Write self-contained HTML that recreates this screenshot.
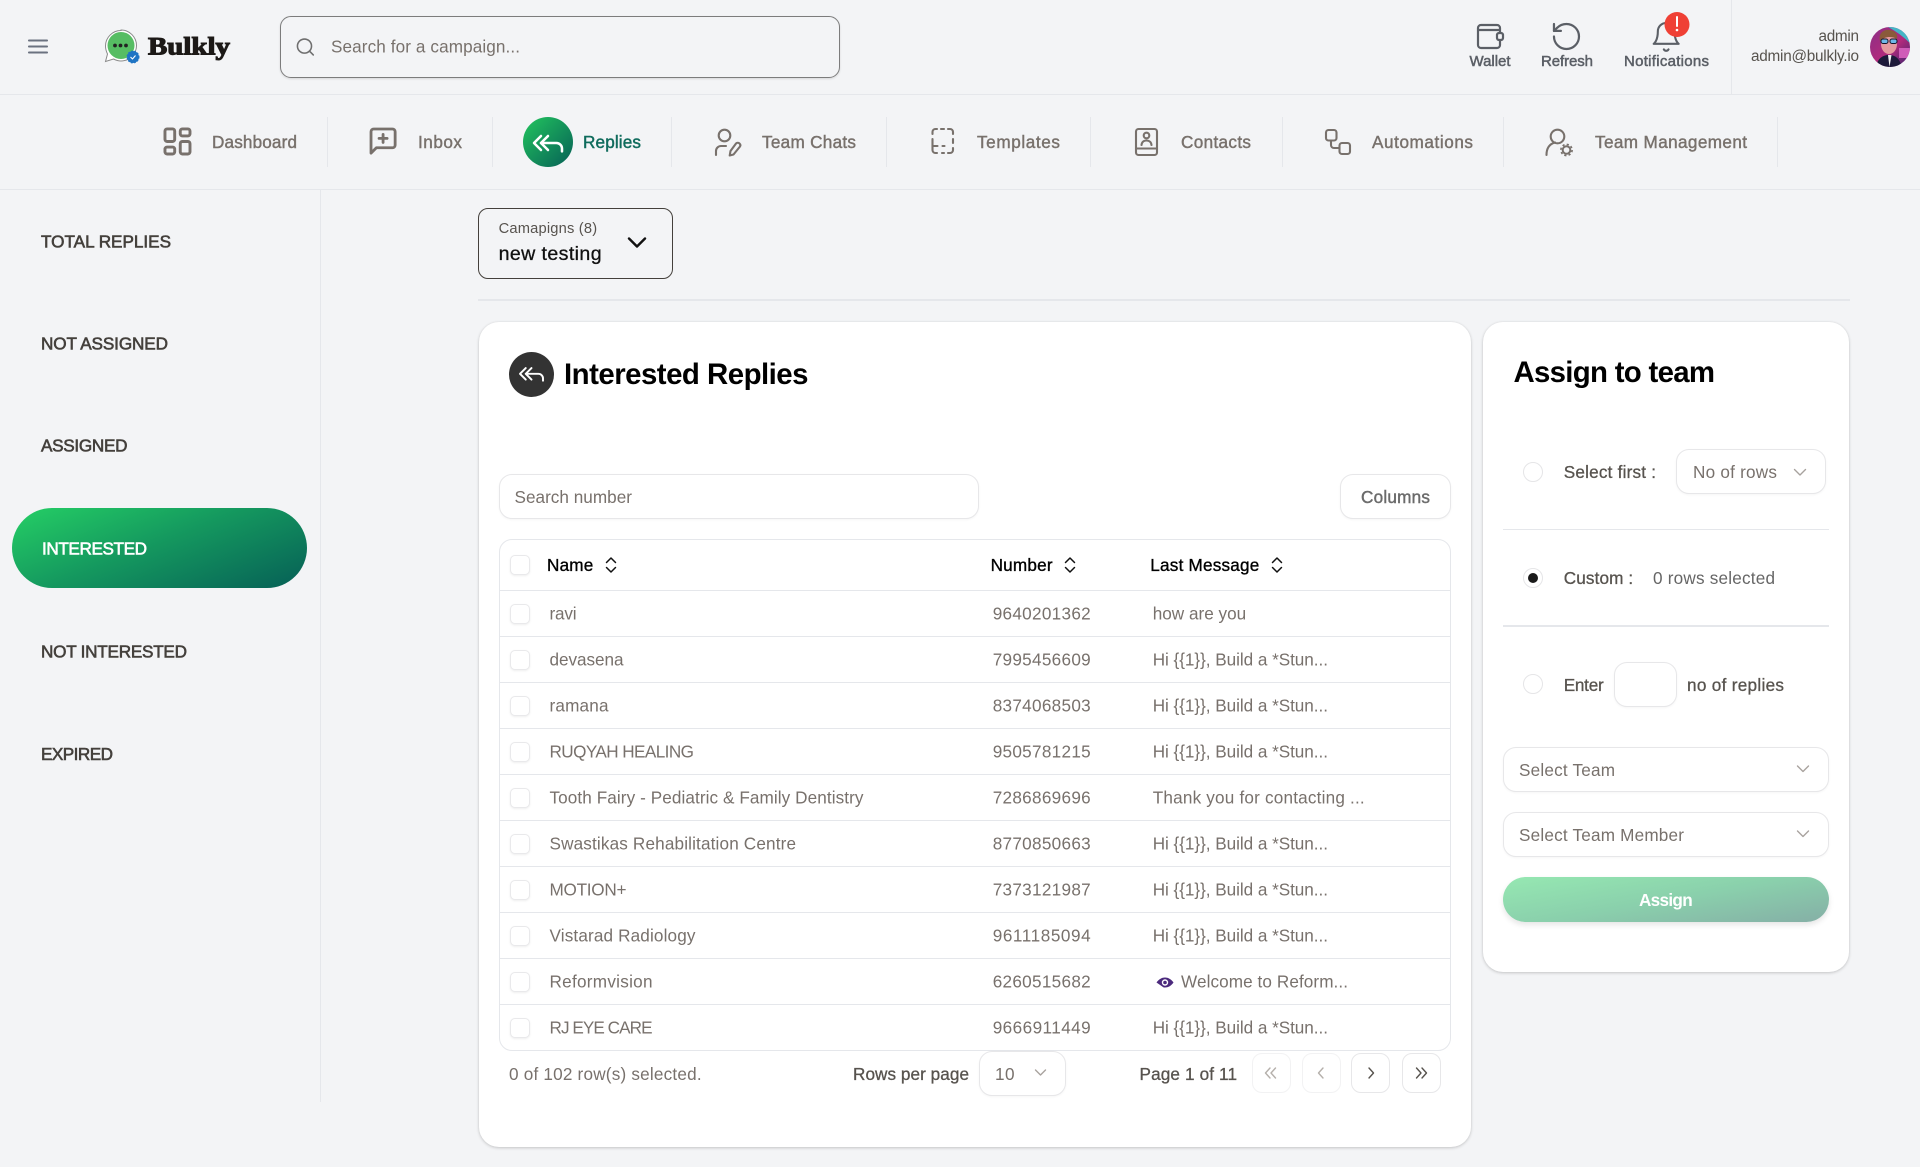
<!DOCTYPE html>
<html lang="en">
<head>
<meta charset="utf-8">
<title>Bulkly - Interested Replies</title>
<style>
*{box-sizing:border-box}
html,body{margin:0;padding:0;width:1920px;height:1167px;overflow:hidden;background:#f3f4f6;font-family:"Liberation Sans",sans-serif}
.b{position:absolute}
.line{background:#e5e7eb}
.card{background:#fff;border-radius:20px;box-shadow:0 1px 3px rgba(0,0,0,.18),0 0 2px rgba(0,0,0,.06)}
.field{background:#fff;border:1.5px solid #e7e7e9;border-radius:13px;box-shadow:0 1px 2px rgba(0,0,0,.04)}
.chk{width:20px;height:20px;left:510px;background:#fff;border:1.5px solid #e9e9eb;border-radius:5px;box-shadow:0 1px 2px rgba(0,0,0,.07)}
.pg{background:#fff;border:1.5px solid #e7e7e9;border-radius:10px;top:1053px;width:39px;height:40px}
.radio{width:20px;height:20px;left:1523px;background:#fff;border:1.5px solid #e5e5e7;border-radius:50%}
svg#o{position:absolute;left:0;top:0;width:1920px;height:1167px;pointer-events:none}
text{font-family:"Liberation Sans",sans-serif;font-size:17.15px;fill:#78716c}
.m{stroke:#78716c;stroke-width:.42px}
.s{font-size:15px;fill:#5b5f66;stroke:#5b5f66;stroke-width:.5px}
.side{fill:#44403c;stroke:#44403c;stroke-width:.6px}
.h{fill:#000;stroke:#000;stroke-width:.35px}
.d{fill:#57534e;stroke:#57534e;stroke-width:.3px}
.ic{fill:none;stroke:#78716c;stroke-width:2.1;stroke-linecap:round;stroke-linejoin:round}
.tp{fill:none;stroke:#5b5f66;stroke-linecap:round;stroke-linejoin:round}
.ch{fill:none;stroke:#a8a29e;stroke-width:1.4;stroke-linecap:round;stroke-linejoin:round}
.so{fill:none;stroke:#111;stroke-width:1.5;stroke-linecap:round;stroke-linejoin:round}
</style>
</head>
<body>
<!-- header / nav rules -->
<div class="b line" style="left:0;top:94px;width:1920px;height:1px"></div>
<div class="b line" style="left:1731px;top:0;width:1px;height:94px"></div>
<div class="b line" style="left:0;top:189px;width:1920px;height:1px"></div>
<div class="b" style="left:280px;top:16px;width:560px;height:62px;border:1.5px solid #7c7c7c;border-radius:11px;box-shadow:0 1px 2px rgba(0,0,0,.12)"></div>
<div class="b line" style="left:327px;top:117px;width:1px;height:50px"></div>
<div class="b line" style="left:492px;top:117px;width:1px;height:50px"></div>
<div class="b line" style="left:671px;top:117px;width:1px;height:50px"></div>
<div class="b line" style="left:886px;top:117px;width:1px;height:50px"></div>
<div class="b line" style="left:1090px;top:117px;width:1px;height:50px"></div>
<div class="b line" style="left:1282px;top:117px;width:1px;height:50px"></div>
<div class="b line" style="left:1503px;top:117px;width:1px;height:50px"></div>
<div class="b line" style="left:1776.500px;top:117px;width:1.5px;height:50px"></div>
<div class="b" style="left:523px;top:117px;width:50px;height:50px;border-radius:50%;background:linear-gradient(135deg,#22c55e,#065f56)"></div>
<!-- sidebar -->
<div class="b line" style="left:320px;top:190px;width:1px;height:912px"></div>
<div class="b" style="left:12px;top:508px;width:295px;height:80px;border-radius:40px;background:linear-gradient(158deg,#25cf65 0%,#159a5f 45%,#065f56 100%)"></div>
<!-- campaign selector -->
<div class="b" style="left:478px;top:208px;width:195px;height:71px;border:1.5px solid #44403c;border-radius:10px"></div>
<div class="b line" style="left:477.500px;top:299px;width:1372.500px;height:2px"></div>
<!-- main card -->
<div class="b card" style="left:479px;top:322px;width:992px;height:825px"></div>
<div class="b" style="left:509px;top:352px;width:45px;height:45px;border-radius:50%;background:#333"></div>
<div class="b field" style="left:499px;top:474px;width:480px;height:45px"></div>
<div class="b field" style="left:1340px;top:474px;width:111px;height:45px"></div>
<div class="b" style="left:499px;top:539px;width:952px;height:512px;border:1.5px solid #e5e7eb;border-radius:13px"></div>
<div class="b line" style="left:500px;top:590px;width:950px;height:1px"></div>
<div class="b line" style="left:500px;top:636px;width:950px;height:1px"></div>
<div class="b line" style="left:500px;top:682px;width:950px;height:1px"></div>
<div class="b line" style="left:500px;top:728px;width:950px;height:1px"></div>
<div class="b line" style="left:500px;top:774px;width:950px;height:1px"></div>
<div class="b line" style="left:500px;top:820px;width:950px;height:1px"></div>
<div class="b line" style="left:500px;top:866px;width:950px;height:1px"></div>
<div class="b line" style="left:500px;top:912px;width:950px;height:1px"></div>
<div class="b line" style="left:500px;top:958px;width:950px;height:1px"></div>
<div class="b line" style="left:500px;top:1004px;width:950px;height:1px"></div>
<div class="b chk" style="top:555px"></div>
<div class="b chk" style="top:604px"></div>
<div class="b chk" style="top:650px"></div>
<div class="b chk" style="top:696px"></div>
<div class="b chk" style="top:742px"></div>
<div class="b chk" style="top:788px"></div>
<div class="b chk" style="top:834px"></div>
<div class="b chk" style="top:880px"></div>
<div class="b chk" style="top:926px"></div>
<div class="b chk" style="top:972px"></div>
<div class="b chk" style="top:1018px"></div>
<div class="b field" style="left:979px;top:1051px;width:87px;height:45px"></div>
<div class="b pg" style="left:1251.5px;opacity:.5"></div>
<div class="b pg" style="left:1301.5px;opacity:.5"></div>
<div class="b pg" style="left:1351px"></div>
<div class="b pg" style="left:1401.5px"></div>
<!-- assign card -->
<div class="b card" style="left:1483px;top:322px;width:366px;height:650px"></div>
<div class="b radio" style="top:462px"></div>
<div class="b radio" style="top:568px"></div>
<div class="b" style="left:1528px;top:573px;width:10px;height:10px;border-radius:50%;background:#1a1a1a"></div>
<div class="b radio" style="top:674px"></div>
<div class="b field" style="left:1676px;top:449px;width:150px;height:45px"></div>
<div class="b line" style="left:1503px;top:529px;width:326px;height:1px"></div>
<div class="b line" style="left:1503px;top:625px;width:326px;height:2px"></div>
<div class="b field" style="left:1614px;top:662px;width:63px;height:45px"></div>
<div class="b field" style="left:1503px;top:747px;width:326px;height:45px"></div>
<div class="b field" style="left:1503px;top:812px;width:326px;height:45px"></div>
<div class="b" style="left:1503px;top:877px;width:326px;height:45px;border-radius:23px;background:linear-gradient(170deg,#96e8b2 0%,#8ad0ac 50%,#85afa6 100%);box-shadow:0 3px 6px rgba(0,0,0,.1)"></div>

<svg id="o" viewBox="0 0 1920 1167" xmlns="http://www.w3.org/2000/svg">
<defs>
<clipPath id="av"><circle cx="1890" cy="47" r="20"/></clipPath>
<linearGradient id="avg" x1="0" y1="0" x2="1" y2="1"><stop offset="0" stop-color="#8a2f86"/><stop offset=".55" stop-color="#b32a7c"/><stop offset="1" stop-color="#3a2470"/></linearGradient>
</defs>

<!-- hamburger -->
<path d="M29 40.500h18M29 46.500h18M29 52.500h18" fill="none" stroke="#6b7280" stroke-width="2.100" stroke-linecap="round"/>

<!-- logo -->
<path d="M121 30.500c-8.500 0-15.500 7-15.500 15.500 0 3 .8 5.500 2 8l-2 7.500 8-2.500c2.300 1.200 4.800 2 7.500 2 8.500 0 15.500-7 15.500-15.500s-7-15.500-15.500-15.500z" fill="#fff" stroke="#8a8a8a" stroke-width="1"/>
<circle cx="121" cy="45.500" r="13.500" fill="#56bd63"/>
<circle cx="115" cy="45.500" r="1.900" fill="#222"/><circle cx="120.500" cy="45.500" r="1.900" fill="#222"/><circle cx="126" cy="45.500" r="1.900" fill="#222"/>
<circle cx="133" cy="57" r="6" fill="#1f74c4"/><circle cx="133" cy="57" r="5.500" fill="none" stroke="#1f74c4" stroke-width="2" stroke-dasharray="1.500 1.500"/>
<path d="M130.500 57l2 2 3-3.500" fill="none" stroke="#fff" stroke-width="1.100"/>
<text x="148" y="54.500" textLength="82" lengthAdjust="spacingAndGlyphs" style="font-family:'Liberation Serif',serif;font-size:25px;font-weight:bold;fill:#1c1917;stroke:#1c1917;stroke-width:1.100px">Bulkly</text>

<!-- search -->
<g transform="translate(294.800 36.400) scale(.88)" fill="none" stroke="#6f6f6f" stroke-width="1.800" stroke-linecap="round"><circle cx="11" cy="11" r="8"/><path d="M21 21l-4.350-4.350"/></g>
<text x="331" y="52.500" textLength="189">Search for a campaign...</text>

<!-- top actions -->
<g class="tp" stroke-width="2.200">
<path d="M1500 33v-5a3 3 0 0 0-3-3h-16a3 3 0 0 0-3 3v17a3 3 0 0 0 3 3h16a3 3 0 0 0 3-3v-5"/>
<path d="M1478.500 30h21"/>
<rect x="1497" y="33" width="6" height="7" rx="2"/>
</g>
<g transform="translate(1549.800 19.800) scale(1.390)" class="tp" stroke-width="1.600"><path d="M3 12a9 9 0 1 0 9-9 9.750 9.750 0 0 0-6.740 2.740L3 8"/><path d="M3 3v5h5"/></g>
<g transform="translate(1649.500 20.200) scale(1.390)" class="tp" stroke-width="1.500"><path d="M6 8a6 6 0 0 1 12 0c0 7 3 9 3 9H3s3-2 3-9"/><path d="M10.300 21a1.940 1.940 0 0 0 3.400 0"/></g>
<circle cx="1677" cy="24.500" r="12.500" fill="#ef4035"/>
<rect x="1676" y="16" width="2" height="11" rx="1" fill="#fff"/><circle cx="1677" cy="30" r="1.300" fill="#fff"/>
<text class="s" x="1469.500" y="66" textLength="41">Wallet</text>
<text class="s" x="1541" y="66" textLength="52">Refresh</text>
<text class="s" x="1624" y="66" textLength="85">Notifications</text>
<text x="1818.500" y="41" textLength="40.500" style="font-size:15.300px;fill:#57534e">admin</text>
<text x="1751" y="61" textLength="108" style="font-size:15.300px;fill:#57534e">admin@bulkly.io</text>

<!-- avatar -->
<g clip-path="url(#av)">
<rect x="1870" y="27" width="40" height="40" fill="url(#avg)"/>
<path d="M1888 27h22v16c-5-4-9-9-22-16z" fill="#43b6c6"/>
<rect x="1899" y="48" width="11" height="10" fill="#d05cb8"/>
<path d="M1876 68c1-9 6-13 13-13s11 4 13 13z" fill="#1d1a3a"/>
<path d="M1888 55l1.500 12 2-12z" fill="#f2f2f2"/>
<ellipse cx="1889" cy="44" rx="8" ry="10" fill="#e59aa0"/>
<path d="M1880 41c-2-8 4-12 10-11 6 1 8 5 7 9-5-3-12-3-17 2z" fill="#8a5a3a"/>
<rect x="1881" y="39" width="7" height="4.500" rx="2" fill="#6fb8e8" stroke="#15152a" stroke-width="1"/>
<rect x="1890" y="39" width="7" height="4.500" rx="2" fill="#6fb8e8" stroke="#15152a" stroke-width="1"/>
</g>

<!-- nav icons -->
<g transform="translate(160.800 124.800) scale(1.390)" class="ic" stroke-width="1.450"><rect x="3" y="3" width="7" height="9" rx="1.500"/><rect x="14" y="3" width="7" height="5" rx="1.500"/><rect x="14" y="12" width="7" height="9" rx="1.500"/><rect x="3" y="16" width="7" height="5" rx="1.500"/></g>
<text class="m" x="212" y="148" textLength="85">Dashboard</text>

<g transform="translate(367 125) scale(1.340)" class="ic" stroke-width="1.400"><path d="M21 15a2 2 0 0 1-2 2H7l-4 4V5a2 2 0 0 1 2-2h14a2 2 0 0 1 2 2z"/><path d="M12 7v6M9 10h6"/></g>
<text class="m" x="418" y="148" textLength="44">Inbox</text>

<g transform="translate(531.200 126.200) scale(1.400)" fill="none" stroke="#fff" stroke-width="1.800" stroke-linecap="round" stroke-linejoin="round"><path d="M7 17l-5-5 5-5"/><path d="M12 17l-5-5 5-5"/><path d="M22 18v-2a4 4 0 0 0-4-4H7"/></g>
<text x="583" y="148" textLength="58" style="fill:#0f6b5c;stroke:#0f6b5c;stroke-width:.45px">Replies</text>

<g class="ic"><circle cx="724.500" cy="135.500" r="5.800"/><path d="M716 155v-4a5 5 0 0 1 5-5h5"/><path d="M739.500 143.500a2.400 2.400 0 0 0-3.500 0l-5.500 7.500-.8 4.500 3.800-1 6.500-8a2.400 2.400 0 0 0-.5-3z"/></g>
<text class="m" x="762" y="148" textLength="94">Team Chats</text>

<g class="ic" stroke-width="2.400"><path d="M932.500 134v-2a3 3 0 0 1 3-3h1.500M941 129h3M948 129h2a3 3 0 0 1 3 3v2M953 139v4M953 148v2a3 3 0 0 1-3 3h-2M944 153h-2M937 153h-1.500a3 3 0 0 1-3-3v-11M932.500 146h5M942.500 146h2"/></g>
<text class="m" x="977" y="148" textLength="83">Templates</text>

<g class="ic"><rect x="1136" y="129" width="21" height="26" rx="2.500"/><path d="M1136 148.500h21"/><circle cx="1146.500" cy="135.500" r="2.800"/><path d="M1141.500 145c.3-3 2.300-4.500 5-4.500s4.700 1.500 5 4.500"/></g>
<text class="m" x="1181" y="148" textLength="70">Contacts</text>

<g class="ic"><rect x="1326" y="130" width="10.500" height="10.500" rx="2.500"/><rect x="1339.500" y="143" width="10.500" height="11" rx="2.500"/><path d="M1331 140.500v4.500a3 3 0 0 0 3 3h5.500"/></g>
<text class="m" x="1372" y="148" textLength="101">Automations</text>

<g class="ic"><circle cx="1557.500" cy="136.500" r="6.800"/><path d="M1546.500 155c0-7 3-11 8.500-12.500"/></g>
<circle cx="1566.500" cy="150" r="3.800" fill="none" stroke="#78716c" stroke-width="2"/>
<circle cx="1566.500" cy="150" r="5.600" fill="none" stroke="#78716c" stroke-width="1.600" stroke-dasharray="2.200 2.200"/>
<text class="m" x="1595" y="148" textLength="152">Team Management</text>

<!-- sidebar text -->
<text class="side" x="41" y="247.300" textLength="130">TOTAL REPLIES</text>
<text class="side" x="41" y="349.300" textLength="127">NOT ASSIGNED</text>
<text class="side" x="41" y="451.300" textLength="86.500">ASSIGNED</text>
<text x="42" y="554.500" textLength="105" style="fill:#fff;stroke:#fff;stroke-width:.6px">INTERESTED</text>
<text class="side" x="41" y="657.500" textLength="146">NOT INTERESTED</text>
<text class="side" x="41" y="760" textLength="72">EXPIRED</text>

<!-- campaign selector -->
<text x="498.600" y="233" textLength="98.500" style="font-size:14.700px;fill:#57534e">Camapigns (8)</text>
<text x="498.600" y="260" textLength="103" style="font-size:19.600px;fill:#111;stroke:#111;stroke-width:.3px">new testing</text>
<path d="M629 238.500l8 8 8-8" fill="none" stroke="#111" stroke-width="2.400" stroke-linecap="round" stroke-linejoin="round"/>

<!-- card heading -->
<g transform="translate(517.700 360) scale(1.150)" fill="none" stroke="#fff" stroke-width="1.700" stroke-linecap="round" stroke-linejoin="round"><path d="M7 17l-5-5 5-5"/><path d="M12 17l-5-5 5-5"/><path d="M22 18v-2a4 4 0 0 0-4-4H7"/></g>
<text x="564" y="384" textLength="244.500" style="font-size:29.400px;font-weight:bold;fill:#000">Interested Replies</text>

<text x="514.500" y="503" textLength="117.500">Search number</text>
<text class="m" x="1361" y="503" textLength="69" style="fill:#6b6b6b;stroke:#6b6b6b">Columns</text>

<!-- table head -->
<text class="h" x="547" y="571" textLength="46.300">Name</text>
<path class="so" d="M606.500 562.500l4.500-4.500 4.500 4.500M606.500 567.500l4.500 4.500 4.500-4.500"/>
<text class="h" x="990.600" y="571" textLength="62">Number</text>
<path class="so" d="M1065.500 562.500l4.500-4.500 4.500 4.500M1065.500 567.500l4.500 4.500 4.500-4.500"/>
<text class="h" x="1150.300" y="571" textLength="109">Last Message</text>
<path class="so" d="M1272.500 562.500l4.500-4.500 4.500 4.500M1272.500 567.500l4.500 4.500 4.500-4.500"/>

<!-- rows -->
<text x="549.500" y="619.500" textLength="27">ravi</text>
<text x="992.700" y="619.500" textLength="98">9640201362</text>
<text x="1152.700" y="619.500" textLength="93.500">how are you</text>

<text x="549.500" y="665.500" textLength="74">devasena</text>
<text x="992.700" y="665.500" textLength="98">7995456609</text>
<text x="1152.700" y="665.500" textLength="175.300">Hi {{1}}, Build a *Stun...</text>

<text x="549.500" y="711.500" textLength="59">ramana</text>
<text x="992.700" y="711.500" textLength="98">8374068503</text>
<text x="1152.700" y="711.500" textLength="175.300">Hi {{1}}, Build a *Stun...</text>

<text x="549.500" y="757.500" textLength="144.500">RUQYAH HEALING</text>
<text x="992.700" y="757.500" textLength="98">9505781215</text>
<text x="1152.700" y="757.500" textLength="175.300">Hi {{1}}, Build a *Stun...</text>

<text x="549.500" y="803.500" textLength="314">Tooth Fairy - Pediatric &amp; Family Dentistry</text>
<text x="992.700" y="803.500" textLength="98">7286869696</text>
<text x="1152.700" y="803.500" textLength="212">Thank you for contacting ...</text>

<text x="549.500" y="849.500" textLength="246.500">Swastikas Rehabilitation Centre</text>
<text x="992.700" y="849.500" textLength="98">8770850663</text>
<text x="1152.700" y="849.500" textLength="175.300">Hi {{1}}, Build a *Stun...</text>

<text x="549.500" y="895.500" textLength="77">MOTION+</text>
<text x="992.700" y="895.500" textLength="98">7373121987</text>
<text x="1152.700" y="895.500" textLength="175.300">Hi {{1}}, Build a *Stun...</text>

<text x="549.500" y="941.500" textLength="146">Vistarad Radiology</text>
<text x="992.700" y="941.500" textLength="98">9611185094</text>
<text x="1152.700" y="941.500" textLength="175.300">Hi {{1}}, Build a *Stun...</text>

<text x="549.500" y="987.500" textLength="103">Reformvision</text>
<text x="992.700" y="987.500" textLength="98">6260515682</text>
<path d="M1156.500 982.500c2.500-3.500 5.500-5 8.500-5s6 1.500 8.500 5c-2.500 3.500-5.500 5-8.500 5-.6 0-1 0-1.500-.1z" fill="#4c2a7d"/>
<circle cx="1165" cy="982.500" r="3.200" fill="#fff"/><circle cx="1165" cy="982.500" r="1.800" fill="#4c2a7d"/>
<text x="1181" y="987.500" textLength="167">Welcome to Reform...</text>

<text x="549.500" y="1033.500" textLength="103">RJ EYE CARE</text>
<text x="992.700" y="1033.500" textLength="98">9666911449</text>
<text x="1152.700" y="1033.500" textLength="175.300">Hi {{1}}, Build a *Stun...</text>

<!-- footer -->
<text x="509" y="1080" textLength="192.600">0 of 102 row(s) selected.</text>
<text class="d" x="853" y="1080" textLength="116">Rows per page</text>
<text x="995" y="1080" textLength="19.500">10</text>
<path class="ch" d="M1035.500 1070l5 5 5-5"/>
<text class="d" x="1139.500" y="1080" textLength="97.500">Page 1 of 11</text>
<g fill="none" stroke-linecap="round" stroke-linejoin="round" stroke-width="1.400">
<path d="M1270 1068l-4.500 5 4.500 5M1275.500 1068l-4.500 5 4.500 5" stroke="#b5b0ab"/>
<path d="M1323 1068l-4.500 5 4.500 5" stroke="#b5b0ab"/>
<path d="M1369 1068l4.500 5-4.500 5" stroke="#57534e"/>
<path d="M1416.500 1068l4.500 5-4.500 5M1422 1068l4.500 5-4.500 5" stroke="#57534e"/>
</g>

<!-- assign card text -->
<text x="1513.500" y="382" textLength="201.500" style="font-size:29.400px;font-weight:bold;fill:#000">Assign to team</text>
<text class="d" x="1563.700" y="478" textLength="92.300">Select first :</text>
<text x="1693" y="478" textLength="84">No of rows</text>
<path class="ch" d="M1794.500 469.500l5.500 5.500 5.500-5.500"/>
<text class="d" x="1563.700" y="584" textLength="69.500">Custom :</text>
<text x="1653" y="584" textLength="122" style="fill:#666">0 rows selected</text>
<text class="d" x="1563.700" y="691" textLength="40">Enter</text>
<text class="d" x="1687" y="691" textLength="97">no of replies</text>
<text x="1519" y="776" textLength="96">Select Team</text>
<path class="ch" d="M1797.500 766l5.500 5.500 5.500-5.500"/>
<text x="1519" y="841" textLength="165">Select Team Member</text>
<path class="ch" d="M1797.500 831l5.500 5.500 5.500-5.500"/>
<text x="1639" y="906" textLength="53.700" style="font-weight:bold;fill:#fff">Assign</text>
</svg>
</body>
</html>
